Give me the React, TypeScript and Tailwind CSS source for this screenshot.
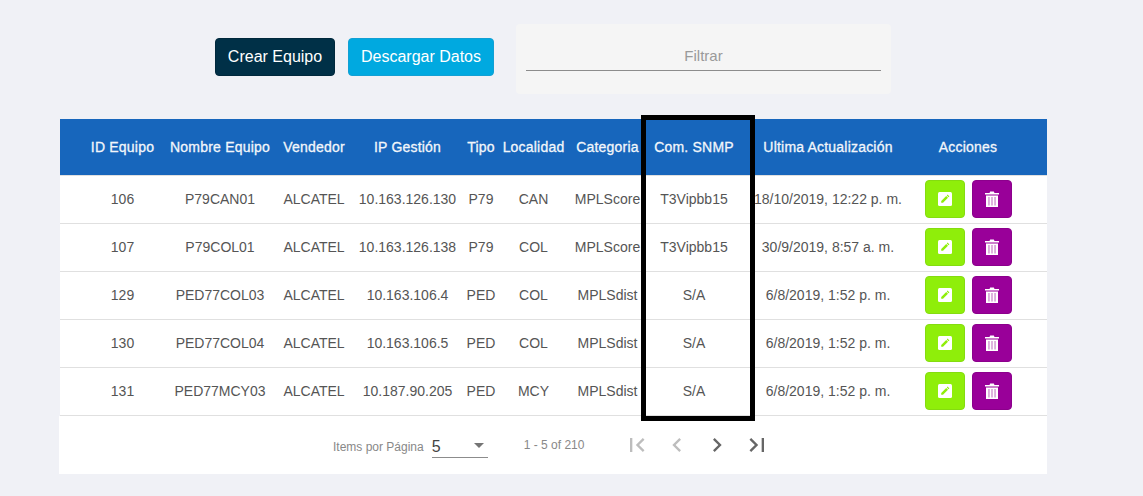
const rows = [
  ["106", "P79CAN01", "ALCATEL", "10.163.126.130", "P79", "CAN", "MPLScore", "T3Vipbb15", "18/10/2019, 12:22 p. m."],
  ["107", "P79COL01", "ALCATEL", "10.163.126.138", "P79", "COL", "MPLScore", "T3Vipbb15", "30/9/2019, 8:57 a. m."],
  ["129", "PED77COL03", "ALCATEL", "10.163.106.4", "PED", "COL", "MPLSdist", "S/A", "6/8/2019, 1:52 p. m."],
  ["130", "PED77COL04", "ALCATEL", "10.163.106.5", "PED", "COL", "MPLSdist", "S/A", "6/8/2019, 1:52 p. m."],
  ["131", "PED77MCY03", "ALCATEL", "10.187.90.205", "PED", "MCY", "MPLSdist", "S/A", "6/8/2019, 1:52 p. m."],
];

const headers = ["ID Equipo", "Nombre Equipo", "Vendedor", "IP Gestión", "Tipo", "Localidad", "Categoria", "Com. SNMP", "Ultima Actualización", "Acciones"];

const cols = "grid grid-cols-[75px_120px_68px_119px_28px_77px_71px_102px_166px_114px]";

const Icon = ({ d, className }: { d: string; className: string }) => (
  <svg viewBox="0 0 24 24" className={className} fill="currentColor">
    <path d={d} />
  </svg>
);

const EditIcon = () => (
  <svg viewBox="0 0 14 14" className="w-[14px] h-[14px]">
    <rect width="14" height="14" rx="1.5" fill="#fff" />
    <path d="M3.2 9l5-5 1.800 1.800-5 5H3.200z M8.800 3.400l.8-.8 1.800 1.800-.8.8z" fill="#8fee0a" />
  </svg>
);

const TrashIcon = () => (
  <svg viewBox="0 0 14 16" className="w-[14px] h-[16px]">
    <path d="M0 2h4.500l.7-1.500h3.600L9.500 2H14v1.500H0z" fill="#fff" />
    <path d="M1 4.500h12V16H1z" fill="#fff" />
    <path d="M3.200 6h1.500v8.500H3.200zM6.250 6h1.500v8.500h-1.500zM9.300 6h1.500v8.500H9.300z" fill="#d49ad4" />
  </svg>
);

export default function App() {
  return (
    <div className="min-h-[496px] bg-[#f0f1f6] pl-[59px] pt-[24px] font-['Liberation_Sans',Arial,sans-serif]">
      <div className="relative w-[988px]">
        <div className="flex justify-center items-start gap-[13px]">
          <button className="mt-[14px] h-[38px] w-[120px] rounded border border-[#00283c] bg-[#003047] text-white text-base">Crear Equipo</button>
          <button className="mt-[14px] h-[38px] w-[146px] rounded border border-[#12a0d4] bg-[#00a9e0] text-white text-base">Descargar Datos</button>
          <div className="ml-[9px] h-[70px] w-[375px] rounded bg-[#f5f5f5] px-[10px] pt-[22px]">
            <div className="h-[25px] border-b border-[#8c8c8c] text-center text-[15px] leading-[20px] text-[#9a9a9a]">Filtrar</div>
          </div>
        </div>

        <div className="mt-[25px]">
          <div className="ml-px border-b border-[#e0e0e0]">
            <div className={`${cols} h-[56px] items-center bg-[#1766bc] pl-[25px] text-center text-sm tracking-[0.2px] text-[#f2f6fb] [-webkit-text-stroke:0.3px_#f2f6fb]`}>
              {headers.map((h) => (
                <div key={h} className="whitespace-nowrap flex justify-center">{h}</div>
              ))}
            </div>
          </div>
          {rows.map((row) => (
            <div key={row[0]} className={`${cols} ml-px h-[48px] items-center border-b border-[#e0e0e0] bg-white pb-px pl-[25px] text-center text-sm text-[#555]`}>
              {row.map((cell, i) => (
                <div key={i} className="whitespace-nowrap flex justify-center">{cell}</div>
              ))}
              <div className="flex justify-center gap-[7px]">
                <button className="flex h-[38px] w-[40px] items-center justify-center rounded border border-[#84dc10] bg-[#8fee0a]"><EditIcon /></button>
                <button className="flex h-[38px] w-[40px] items-center justify-center rounded border border-[#8c008c] bg-[#990099]"><TrashIcon /></button>
              </div>
            </div>
          ))}
          <div className="flex h-[58px] items-center bg-white pl-[274px]">
            <span className="pt-1 text-xs text-[#888]">Items por Página</span>
            <div className="relative ml-2 h-[26px] w-[56px] border-b border-[#8c8c8c] pt-[2px] text-base leading-[26px] text-[#444]">
              5
              <div className="absolute right-[4px] top-[11px] h-0 w-0 border-x-[5.500px] border-t-[5px] border-x-transparent border-t-[#757575]" />
            </div>
            <span className="ml-[36px] text-xs text-[#888]">1 - 5 of 210</span>
            <div className="ml-[39px] flex gap-[12px]">
              <Icon className="h-7 w-7 text-[#bdbdbd]" d="M18.41 16.59L13.82 12l4.59-4.59L17 6l-6 6 6 6zM6 6h2v12H6z" />
              <Icon className="h-7 w-7 text-[#bdbdbd]" d="M15.41 7.41L14 6l-6 6 6 6 1.41-1.41L10.830 12z" />
              <Icon className="h-7 w-7 text-[#666]" d="M10 6L8.590 7.410 13.170 12l-4.580 4.590L10 18l6-6z" />
              <Icon className="h-7 w-7 text-[#666]" d="M5.590 7.410L10.180 12l-4.590 4.590L7 18l6-6-6-6zM16 6h2v12h-2z" />
            </div>
          </div>
        </div>

        <div className="absolute left-[582px] top-[91px] h-[306px] w-[114px] border-[5px] border-black" />
      </div>
    </div>
  );
}
